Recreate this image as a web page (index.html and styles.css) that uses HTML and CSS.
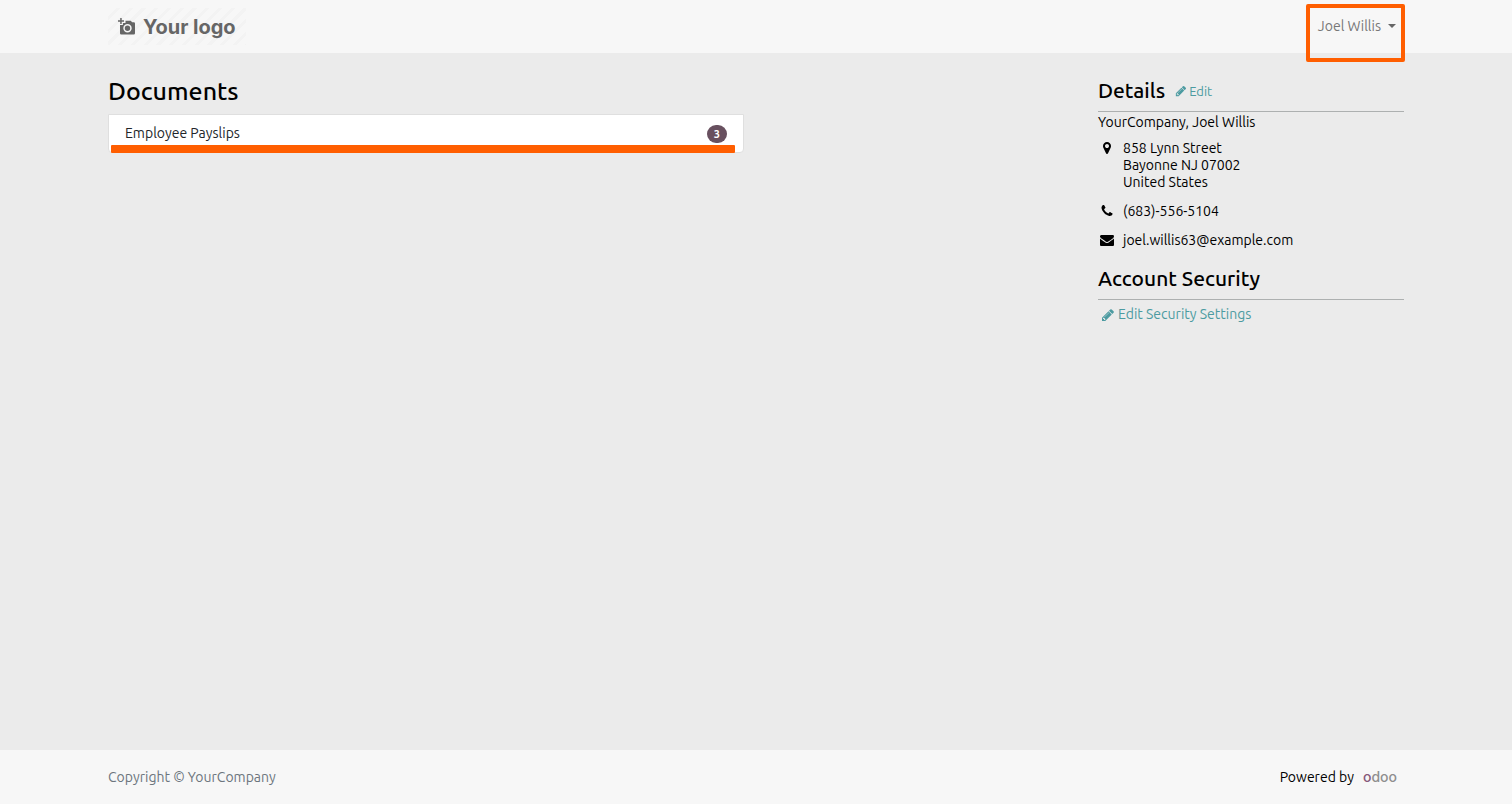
FILE: index.html
```html
<!DOCTYPE html>
<html lang="en">
<head>
<meta charset="utf-8">
<meta name="viewport" content="width=device-width, initial-scale=1">
<title>My Portal</title>
<link rel="stylesheet" href="styles.css">
</head>
<body>
<svg class="sprite" aria-hidden="true">
  <symbol id="pencil" viewBox="0 0 1792 1792"><path d="M491 1536l91-91-235-235-91 91v107h128v128h107zm523-928q0-22-22-22-10 0-17 7l-542 542q-7 7-7 17 0 22 22 22 10 0 17-7l542-542q7-7 7-17zm-54-192l416 416-832 832h-416v-416zm683 96q0 53-37 90l-166 166-416-416 166-165q36-38 90-38 53 0 91 38l235 234q37 39 37 91z"/></symbol>
</svg>
<header class="header">
  <div class="container header-row">
    <a class="logo" href="#">
      <svg class="logo-icon" viewBox="0 0 18 18" aria-hidden="true">
        <path fill="currentColor" fill-rule="evenodd" d="M2.200 0h1.500v2.300H6v1.500H3.700V6H2.200V3.800H0V2.300h2.200zM7.500 2.700h5.200l1.500 1.600h1.600Q17 4.300 17 5.500v9.800q0 1.200-1.200 1.200H3.200Q2 16.500 2 15.300V7.100h2.900V5h2.600zM9.500 6.100a4.200 4.200 0 1 0 0 8.400 4.200 4.200 0 0 0 0-8.400zm0 1.500a2.700 2.700 0 1 1 0 5.400 2.700 2.700 0 0 1 0-5.400z"/>
      </svg>
      <span>Your logo</span>
    </a>
    <div class="user">
      <button class="user-button" type="button">Joel Willis<span class="caret"></span></button>
    </div>
  </div>
</header>
<main class="main">
  <div class="container columns">
    <section class="documents">
      <h1 class="title">Documents</h1>
      <a class="doc-item" href="#"><span>Employee Payslips</span><span class="badge">3</span></a>
    </section>
    <aside class="side">
      <div class="side-head">
        <h2 class="side-title">Details</h2>
        <a class="link link-small" href="#"><svg class="icon-small"><use href="#pencil"/></svg>Edit</a>
      </div>
      <address class="address">
        <div class="company">YourCompany, Joel Willis</div>
        <div class="contact">
          <svg class="icon" viewBox="0 0 1792 1792"><path d="M1152 640q0-106-75-181t-181-75-181 75-75 181 75 181 181 75 181-75 75-181zm256 0q0 109-33 179l-364 774q-16 33-47.5 52t-67.5 19-67.5-19-46.500-52l-365-774q-33-70-33-179 0-212 150-362t362-150 362 150 150 362z"/></svg>
          <div>858 Lynn Street<br>Bayonne NJ 07002<br>United States</div>
        </div>
        <div class="contact">
          <svg class="icon" viewBox="0 0 1792 1792"><path d="M1600 1240q0 27-10 70.500t-21 68.500q-21 50-122 106-94 51-186 51-27 0-53-3.500t-57.500-12.500-47-14.500-55.500-20.500-49-18q-98-35-175-83-127-79-264-216t-216-264q-48-77-83-175-3-9-18-49t-20.500-55.500-14.500-47-12.500-57.500-3.500-53q0-92 51-186 56-101 106-122 25-11 68.500-21t70.500-10q14 0 21 3 18 6 53 76 11 19 30 54t35 63.500 31 53.500q3 4 17.500 25t21.500 35.500 7 28.500q0 20-28.500 50t-62 55-62 53-28.500 46q0 9 5 22.500t8.500 20.500 14 24 11.500 19q76 137 174 235t235 174q2 1 19 11.500t24 14 20.500 8.500 22.500 5q18 0 46-28.500t53-62 55-62 50-28.500q14 0 28.500 7t35.500 21.500 25 17.500q25 15 53.500 31t63.500 35 54 30q70 35 76 53 3 7 3 21z"/></svg>
          <div>(683)-556-5104</div>
        </div>
        <div class="contact">
          <svg class="icon" viewBox="0 0 1792 1792"><path d="M1792 710v794q0 66-47 113t-113 47h-1472q-66 0-113-47t-47-113v-794q44 49 101 87 362 246 497 345 57 42 92.500 65.500t94.500 48 110 24.500h2q51 0 110-24.500t94.500-48 92.500-65.500q170-123 498-345 57-39 100-87zm0-294q0 79-49 151t-122 123q-376 261-468 325-10 7-42.500 31t-54 38.500-52 32.500-57.500 27-50 9h-2q-23 0-50-9t-57.500-27-52-32.500-54-38.500-42.500-31q-91-64-262-182.500t-205-142.500q-62-42-117-115.500t-55-136.500q0-78 41.500-130t118.500-52h1472q65 0 112.500 47t47.500 113z"/></svg>
          <div>joel.willis63@example.com</div>
        </div>
      </address>
      <div class="side-head">
        <h2 class="side-title">Account Security</h2>
      </div>
      <a class="link security" href="#"><svg class="icon"><use href="#pencil"/></svg>Edit Security Settings</a>
    </aside>
  </div>
</main>
<footer class="footer">
  <div class="container footer-row">
    <span class="copyright">Copyright © YourCompany</span>
    <span class="powered">Powered by <a class="odoo" href="#"><span class="odoo-first">o</span>doo</a></span>
  </div>
</footer>
</body>
</html>
```
FILE: styles.css
```css
* { box-sizing: border-box; }
body {
  margin: 0;
  min-height: 100vh;
  display: flex;
  flex-direction: column;
  background: #ebebeb;
  color: #000;
  font: 14px/20px Ubuntu, "Noto Sans", sans-serif;
}
a { text-decoration: none; }
h1, h2 { margin: 0; font-weight: 500; }
.sprite { display: none; }
.container {
  width: 100%;
  max-width: 1320px;
  margin: 0 auto;
  padding: 0 12px;
}
.header { background: #f7f7f7; }
.header-row {
  display: flex;
  justify-content: space-between;
  align-items: flex-start;
  height: 53px;
}
.logo {
  display: flex;
  align-items: center;
  gap: 7px;
  height: 37px;
  margin-top: 8px;
  padding: 0 10px;
  color: #666;
  font: 700 20px/24px Inter, sans-serif;
  background: repeating-linear-gradient(135deg, #f7f7f7 0 6px, #f3f3f3 6px 9px);
}
.logo-icon { width: 18px; height: 18px; }
.user {
  margin: 4px -1px 0 0;
  height: 58px;
  border: 4px solid #ff5e00;
  border-radius: 2px;
  z-index: 1;
}
.user-button {
  display: flex;
  align-items: center;
  gap: 7px;
  padding: 8px 5px 8px 8px;
  border: 0;
  background: none;
  color: #777;
  font: inherit;
}
.caret {
  border: 4px solid transparent;
  border-top-color: #666;
  border-bottom: 0;
}
.main { flex: 1; }
.columns {
  display: flex;
  justify-content: space-between;
  gap: 24px;
  padding-top: 24px;
}
.documents { flex: 0 1 636px; }
.title { font-size: 25px; line-height: 29px; margin-bottom: 8px; }
.doc-item {
  position: relative;
  display: flex;
  justify-content: space-between;
  align-items: flex-start;
  height: 39px;
  padding: 8px 16px;
  border: 1px solid #dfdfdf;
  border-radius: 0 0 4px 4px;
  color: #212529;
  background: #fff;
}
.doc-item::after {
  content: "";
  position: absolute;
  left: 2px;
  right: 8px;
  bottom: -1px;
  height: 8px;
  border-radius: 1px;
  background: #ff5e00;
}
.badge {
  margin-top: 2px;
  padding: 0 7px;
  border-radius: 9px;
  background: #68505f;
  color: #fff;
  font-size: 11px;
  font-weight: 700;
  line-height: 18px;
}
.side { flex: 0 1 306px; }
.side-head {
  display: flex;
  align-items: center;
  gap: 10px;
  padding-bottom: 8px;
  border-bottom: 1px solid #adb0b0;
}
.side-title { font-size: 21px; line-height: 26px; }
.link { display: flex; align-items: center; color: #4c9ba1; }
.link-small { gap: 2px; padding-top: 2px; font-size: 13px; }
.address { font-style: normal; line-height: 17px; margin-bottom: 16px; }
.company { padding: 2px 0 9px; }
.contact { display: flex; gap: 9px; margin-left: 2px; margin-bottom: 12px; }
.icon { width: 14px; height: 14px; margin-top: 1px; fill: currentColor; }
.icon-small { width: 12px; height: 12px; fill: currentColor; }
.security { gap: 3px; padding: 4px 3px; }
.footer { background: #f7f7f7; }
.footer-row {
  display: flex;
  justify-content: space-between;
  align-items: center;
  height: 54px;
}
.copyright { color: #6c757d; }
.powered { display: flex; align-items: center; gap: 9px; padding-right: 7px; }
.odoo { color: #8f8f8f; font: 500 14px/20px Inter, sans-serif; }
.odoo-first { color: #875a7b; }
```
